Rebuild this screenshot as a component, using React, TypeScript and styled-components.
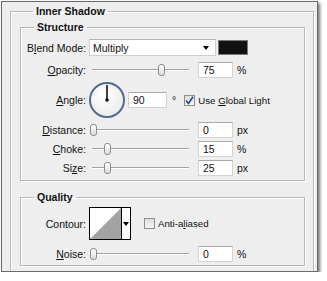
import React from "react";
import styled, { createGlobalStyle } from "styled-components";

const GlobalStyle = createGlobalStyle`
  html, body {
    margin: 0;
    padding: 0;
    background: #ffffff;
  }
  body {
    font-family: "Liberation Sans", Arial, sans-serif;
    color: #111111;
  }
`;

const Frame = styled.div`
  box-sizing: border-box;
  margin: 1px 0 0 1px;
  width: 317px;
  height: 271px;
  border: 1px solid #6a6a6a;
  background: #eeeeee;
  box-shadow: 2px 2px 3px rgba(0, 0, 0, 0.55);
  overflow: hidden;
  padding: 3px 3px 0 8px;
`;

const Group = styled.fieldset<{ $pad: string; $top?: number }>`
  margin: ${(p) => p.$top || 0}px 0 0 0;
  padding: ${(p) => p.$pad};
  min-width: 0;
  border: 1px solid #b8b8b8;
  box-shadow: inset 1px 1px 0 #ffffff, 1px 1px 0 #ffffff;
`;

const Legend = styled.legend`
  margin-left: 13px;
  padding: 0 3px;
  font-size: 10.5px;
  line-height: 12px;
  font-weight: bold;
  color: #111111;
`;

const Row = styled.div<{ $h: number; $gap: number }>`
  display: flex;
  align-items: center;
  height: ${(p) => p.$h}px;
  margin-top: ${(p) => p.$gap}px;
`;

const Label = styled.span`
  flex-shrink: 0;
  width: 65px;
  margin-right: 3px;
  text-align: right;
  font-size: 10.5px;
  white-space: nowrap;
`;

const Key = styled.span`
  text-decoration: underline;
`;

const Select = styled.div`
  box-sizing: border-box;
  display: flex;
  align-items: center;
  justify-content: space-between;
  width: 127px;
  height: 17px;
  padding: 0 6px 0 3px;
  background: #ffffff;
  border: 1px solid #d0d0d0;
  border-top-color: #b4b4b4;
  font-size: 10.5px;
`;

const Arrow = styled.span`
  width: 0;
  height: 0;
  border-left: 3.5px solid transparent;
  border-right: 3.5px solid transparent;
  border-top: 4px solid #000000;
`;

const Swatch = styled.div`
  box-sizing: border-box;
  width: 30px;
  height: 15px;
  margin-left: 2px;
  background: #111111;
  border: 1px solid #7a7a7a;
`;

const SliderBox = styled.div`
  position: relative;
  width: 100px;
  height: 12px;
  margin-right: 9px;
  flex-shrink: 0;
`;

const Track = styled.div`
  position: absolute;
  left: 3px;
  right: 0;
  top: 5px;
  height: 1px;
  background: #a2a2a2;
  border-bottom: 1px solid #ffffff;
`;

const Thumb = styled.div`
  position: absolute;
  top: 0;
  box-sizing: border-box;
  width: 7px;
  height: 12px;
  border: 1px solid #8c8c8c;
  border-radius: 3px;
  background: linear-gradient(#ffffff, #dcdcdc);
`;

const Field = styled.input<{ $w: number }>`
  box-sizing: border-box;
  width: ${(p) => p.$w}px;
  height: 16px;
  padding: 0 0 0 4px;
  margin: 0;
  background: #ffffff;
  border: 1px solid #d4d4d4;
  border-top-color: #a8a8a8;
  font-family: "Liberation Sans", Arial, sans-serif;
  font-size: 10.5px;
  color: #111111;
  outline: none;
  flex-shrink: 0;
`;

const Unit = styled.span<{ $left: number }>`
  margin-left: ${(p) => p.$left}px;
  font-size: 10.5px;
`;

const Dial = styled.div`
  box-sizing: border-box;
  flex-shrink: 0;
  width: 36px;
  height: 36px;
  margin-right: 3px;
  border-radius: 50%;
  border: 2px solid #55688e;
  background: radial-gradient(circle at 40% 35%, #ffffff, #e6e6e6);
`;

const Check = styled.span`
  box-sizing: border-box;
  flex-shrink: 0;
  display: flex;
  align-items: center;
  justify-content: center;
  width: 11px;
  height: 11px;
  background: linear-gradient(#dedede, #f4f4f4);
  border: 1px solid #8e8e8e;
`;

const CheckText = styled.span`
  margin-left: 3px;
  font-size: 9.7px;
  white-space: nowrap;
`;

const ContourPicker = styled.div`
  box-sizing: border-box;
  display: flex;
  width: 42px;
  height: 33px;
  border: 1px solid #000000;
  background: #ffffff;
  flex-shrink: 0;
  margin-right: 13px;
`;

const ContourDrop = styled.div`
  box-sizing: border-box;
  display: flex;
  align-items: center;
  justify-content: center;
  width: 9px;
  border-left: 1px solid #000000;
`;

const Slider = ({ pct }: { pct: number }) => (
  <SliderBox>
    <Track />
    <Thumb style={{ left: 1 + Math.round(pct * 0.91) }} />
  </SliderBox>
);

const SliderRow = ({
  label,
  pct,
  value,
  unit,
  gap,
}: {
  label: React.ReactNode;
  pct: number;
  value: string;
  unit: string;
  gap: number;
}) => (
  <Row $h={16} $gap={gap}>
    <Label>{label}</Label>
    <Slider pct={pct} />
    <Field $w={35} value={value} readOnly />
    <Unit $left={4}>{unit}</Unit>
  </Row>
);

const App = () => (
  <>
    <GlobalStyle />
    <Frame>
      <Group $pad="4px 8px 30px 9px">
        <Legend>Inner Shadow</Legend>
        <Group $pad="0 0 4px 0">
          <Legend>Structure</Legend>
          <Row $h={17} $gap={6}>
            <Label>
              B<Key>l</Key>end Mode:
            </Label>
            <Select>
              Multiply
              <Arrow />
            </Select>
            <Swatch />
          </Row>
          <SliderRow
            label={
              <>
                <Key>O</Key>pacity:
              </>
            }
            pct={75}
            value="75"
            unit="%"
            gap={6}
          />
          <Row $h={36} $gap={4}>
            <Label>
              <Key>A</Key>ngle:
            </Label>
            <Dial>
              <svg width="32" height="32" viewBox="0 0 32 32">
                <line x1="16" y1="16" x2="16" y2="1" stroke="#111" strokeWidth="1.6" />
                <circle cx="16" cy="16" r="1.8" fill="#111" />
              </svg>
            </Dial>
            <Field $w={39} value="90" readOnly />
            <Unit $left={5}>°</Unit>
            <Check style={{ marginLeft: 8 }}>
              <svg width="9" height="9" viewBox="0 0 9 9">
                <path d="M1 4.5 L3.5 7.5 L8 0.8" fill="none" stroke="#24478f" strokeWidth="1.6" />
              </svg>
            </Check>
            <CheckText>
              Use <Key>G</Key>lobal Light
            </CheckText>
          </Row>
          <SliderRow
            label={
              <>
                <Key>D</Key>istance:
              </>
            }
            pct={0}
            value="0"
            unit="px"
            gap={4}
          />
          <SliderRow
            label={
              <>
                <Key>C</Key>hoke:
              </>
            }
            pct={15}
            value="15"
            unit="%"
            gap={3}
          />
          <SliderRow
            label={
              <>
                Si<Key>z</Key>e:
              </>
            }
            pct={15}
            value="25"
            unit="px"
            gap={3}
          />
        </Group>
        <Group $pad="0 0 3px 0" $top={10}>
          <Legend>Quality</Legend>
          <Row $h={33} $gap={4}>
            <Label>Contour:</Label>
            <ContourPicker>
              <svg width="31" height="31" viewBox="0 0 31 31">
                <polygon points="0,31 31,0 31,31" fill="#a3a3a3" />
              </svg>
              <ContourDrop>
                <Arrow />
              </ContourDrop>
            </ContourPicker>
            <Check />
            <CheckText>
              Anti-a<Key>l</Key>iased
            </CheckText>
          </Row>
          <SliderRow
            label={
              <>
                <Key>N</Key>oise:
              </>
            }
            pct={0}
            value="0"
            unit="%"
            gap={6}
          />
        </Group>
      </Group>
    </Frame>
  </>
);

export default App;
